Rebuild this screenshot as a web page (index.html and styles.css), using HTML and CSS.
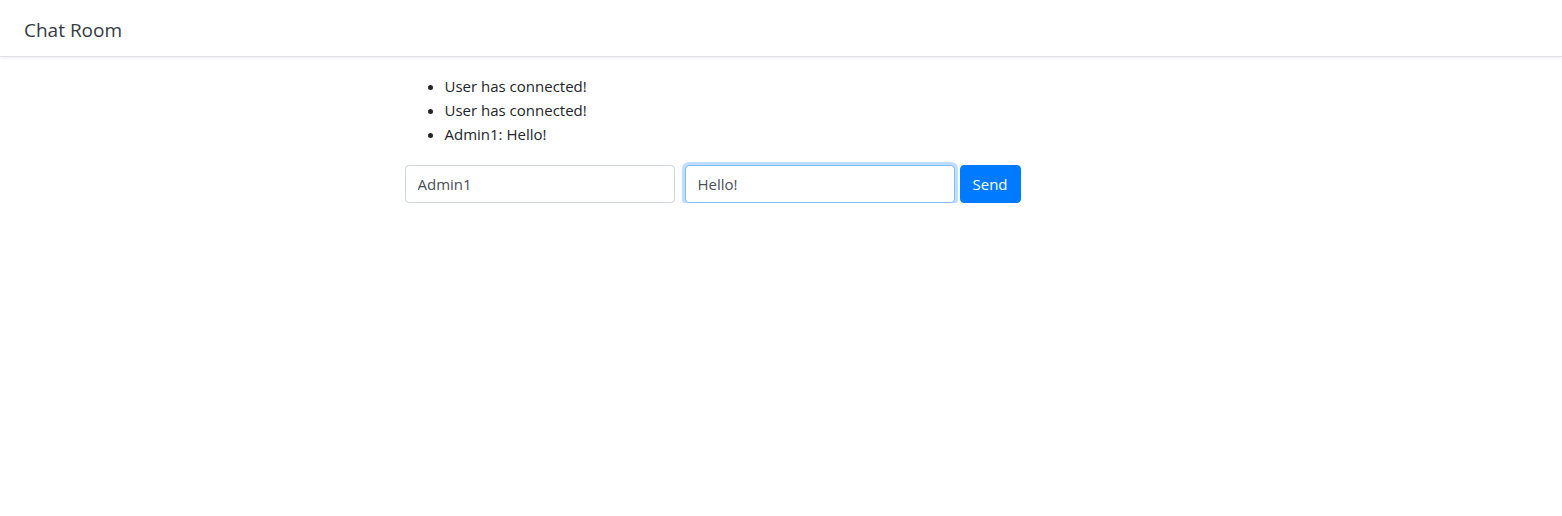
FILE: index.html
```html
<!DOCTYPE html>
<html>
<head>
<meta charset="utf-8">
<link rel="stylesheet" href="styles.css">
</head>
<body>
<nav class="navbar">
  <span class="brand">Chat Room</span>
</nav>
<main class="content">
  <div class="column">
    <ul class="messages">
      <li>User has connected!</li>
      <li>User has connected!</li>
      <li>Admin1: Hello!</li>
    </ul>
    <form class="chat-form">
      <input class="field" type="text" value="Admin1">
      <input class="field focused" type="text" value="Hello!">
      <button class="send" type="button">Send</button>
    </form>
  </div>
</main>
</body>
</html>
```
FILE: styles.css
```css
* { box-sizing: border-box; }
html, body { margin: 0; padding: 0; background: #fff; }
body {
  font-family: "Open Sans", "Noto Sans", sans-serif;
  font-size: 16px;
  line-height: 24px;
  color: #212529;
}
.navbar {
  height: 57px;
  display: flex;
  align-items: center;
  padding: 0 24px;
  border-bottom: 1px solid #dee2e6;
  box-shadow: 0 1px 3px rgba(0,0,0,0.08);
}
.brand {
  font-size: 19px;
  color: #343a40;
  margin-top: 3px;
}
.content {
  display: grid;
  grid-template-columns: 1fr 2fr 1fr;
  padding-top: 17px;
}
.column {
  grid-column: 2;
  padding: 0 15px 0 14px;
}
.messages {
  margin: 0 0 19px 0;
  padding-left: 40px;
  font-size: 15px;
}
.chat-form {
  display: flex;
  align-items: center;
  margin: 0;
}
.field {
  width: 270px;
  height: 38px;
  padding: 6px 12px;
  font-family: inherit;
  font-size: 15px;
  color: #495057;
  border: 1px solid #ced4da;
  border-radius: 4px;
  background: #fff;
  margin-right: 10px;
  outline: none;
}
.field.focused {
  border-color: #80bdff;
  box-shadow: 0 0 0 3px rgba(0,123,255,0.25);
  margin-right: 5px;
}
.send {
  height: 38px;
  width: 61px;
  padding: 0;
  font-family: inherit;
  font-size: 15px;
  color: #fff;
  background: #007bff;
  border: 1px solid #007bff;
  border-radius: 4px;
}
```
